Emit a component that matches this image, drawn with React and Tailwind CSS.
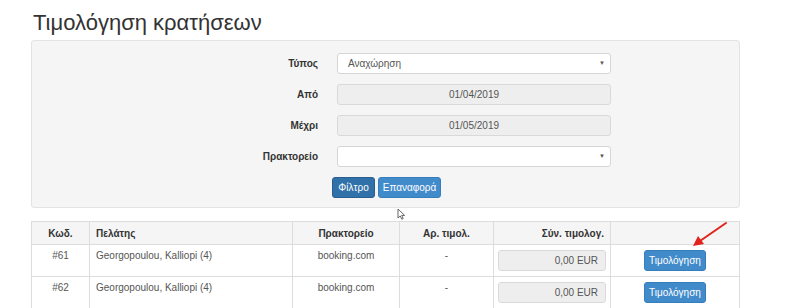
import React from "react";

const font = { fontFamily: '"Liberation Sans", Arial, sans-serif' };

function Row({ label, children }) {
  return (
    <div className="flex items-center h-[21px]">
      <div className="w-[305px] pr-[19px] text-right text-[10px] font-bold text-[#333]">{label}</div>
      {children}
    </div>
  );
}

function Select({ value }) {
  return (
    <div className="w-[274px] h-[21px] bg-white border border-[#d6d6d6] rounded-[3px] flex items-center justify-between pl-[10px] pr-[5px] text-[10px] text-[#555]">
      <span>{value}</span>
      <span className="text-[6px] text-[#555]">▼</span>
    </div>
  );
}

function Disabled({ value }) {
  return (
    <div className="w-[274px] h-[21px] bg-[#eeeeee] border border-[#d9d9d9] rounded-[3px] flex items-center justify-center text-[10px] text-[#555]">
      {value}
    </div>
  );
}

function DataRow({ code }) {
  return (
    <div className="flex h-[32px] border-t border-[#dddddd] bg-white text-[10px] leading-[14px] text-[#555]">
      <div className="w-[57px] text-center pt-[4px]">{code}</div>
      <div className="w-[203px] border-l border-[#dddddd] pl-[6px] pt-[4px]">Georgopoulou, Kalliopi (4)</div>
      <div className="w-[107px] border-l border-[#dddddd] text-center pt-[4px]">booking.com</div>
      <div className="w-[94px] border-l border-[#dddddd] text-center pt-[4px]">-</div>
      <div className="w-[117px] border-l border-[#dddddd] pt-[5px] pl-[4px]">
        <div className="w-[108px] h-[21px] bg-[#eeeeee] border border-[#d9d9d9] rounded-[3px] flex items-center justify-end pr-[7px]">0,00 EUR</div>
      </div>
      <div className="flex-1 border-l border-[#dddddd] pt-[5px] flex justify-center">
        <div className="w-[62px] h-[21px] bg-[#428bca] border border-[#357ebd] rounded-[3px] flex items-center justify-center text-white text-[10px]">Τιμολόγηση</div>
      </div>
    </div>
  );
}

export default function App() {
  return (
    <div className="relative w-[800px] h-[308px] bg-white overflow-hidden" style={font}>
      <div className="pl-[31px] w-[740px]">
        <h1 className="pt-[10px] pl-[2px] h-[40px] text-[22px] leading-[26px] text-[#333]">Τιμολόγηση κρατήσεων</h1>
        <div className="h-[168px] bg-[#f5f5f5] border border-[#e3e3e3] rounded-[3px] pt-[12px] flex flex-col gap-[10px]">
          <Row label="Τύπος"><Select value="Αναχώρηση" /></Row>
          <Row label="Από"><Disabled value="01/04/2019" /></Row>
          <Row label="Μέχρι"><Disabled value="01/05/2019" /></Row>
          <Row label="Πρακτορείο"><Select value="" /></Row>
          <div className="flex gap-[3px] pl-[300px]">
            <div className="w-[43px] h-[21px] bg-[#3071a9] border border-[#285e8e] rounded-[3px] flex items-center justify-center text-white text-[10px]">Φίλτρο</div>
            <div className="w-[63px] h-[21px] bg-[#428bca] border border-[#357ebd] rounded-[3px] flex items-center justify-center text-white text-[10px]">Επαναφορά</div>
          </div>
        </div>
        <div className="mt-[13px] border border-[#dddddd] border-b-0">
          <div className="flex h-[22px] bg-[#f5f5f5] text-[10px] font-bold text-[#333] items-stretch">
            <div className="w-[57px] flex items-center justify-center">Κωδ.</div>
            <div className="w-[203px] border-l border-[#dddddd] flex items-center pl-[6px]">Πελάτης</div>
            <div className="w-[107px] border-l border-[#dddddd] flex items-center justify-center">Πρακτορείο</div>
            <div className="w-[94px] border-l border-[#dddddd] flex items-center justify-center">Αρ. τιμολ.</div>
            <div className="w-[117px] border-l border-[#dddddd] flex items-center justify-end pr-[6px]">Σύν. τιμολογ.</div>
            <div className="flex-1 border-l border-[#dddddd]"></div>
          </div>
          <DataRow code="#61" />
          <DataRow code="#62" />
        </div>
      </div>
      <svg className="absolute left-[397px] top-[208px]" width="9" height="12" viewBox="0 0 9 12">
        <path d="M1 1 L1 10 L3.2 8 L4.8 11.2 L6.2 10.5 L4.7 7.4 L7.6 7.4 Z" fill="white" stroke="#555" strokeWidth="0.9" strokeLinejoin="round" />
      </svg>
      <svg className="absolute left-[690px] top-[220px]" width="40" height="30" viewBox="0 0 40 30">
        <line x1="36" y1="3" x2="10" y2="21" stroke="#e0231c" strokeWidth="2" strokeLinecap="round" />
        <path d="M3 26 L8 16 L14 24 Z" fill="#e0231c" />
      </svg>
    </div>
  );
}
